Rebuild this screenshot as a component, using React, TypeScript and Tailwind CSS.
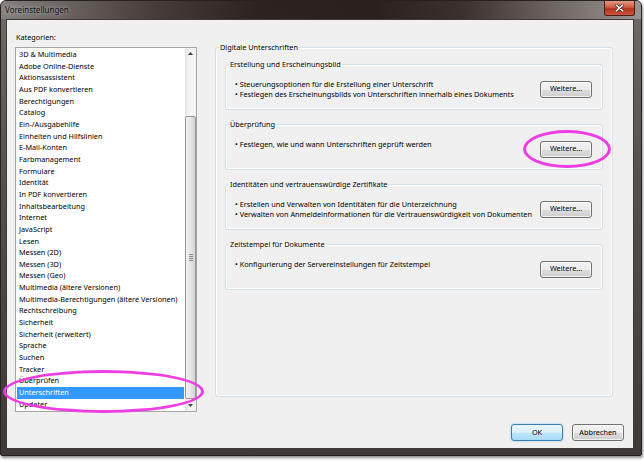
import type { ReactNode } from 'react';

const categories = [
  '3D & Multimedia',
  'Adobe Online-Dienste',
  'Aktionsassistent',
  'Aus PDF konvertieren',
  'Berechtigungen',
  'Catalog',
  'Ein-/Ausgabehilfe',
  'Einheiten und Hilfslinien',
  'E-Mail-Konten',
  'Farbmanagement',
  'Formulare',
  'Identität',
  'In PDF konvertieren',
  'Inhaltsbearbeitung',
  'Internet',
  'JavaScript',
  'Lesen',
  'Messen (2D)',
  'Messen (3D)',
  'Messen (Geo)',
  'Multimedia (ältere Versionen)',
  'Multimedia-Berechtigungen (ältere Versionen)',
  'Rechtschreibung',
  'Sicherheit',
  'Sicherheit (erweitert)',
  'Sprache',
  'Suchen',
  'Tracker',
  'Überprüfen',
  'Unterschriften',
  'Updater',
];

const sections = [
  {
    title: 'Erstellung und Erscheinungsbild',
    lines: [
      'Steuerungsoptionen für die Erstellung einer Unterschrift',
      'Festlegen des Erscheinungsbilds von Unterschriften innerhalb eines Dokuments',
    ],
  },
  {
    title: 'Überprüfung',
    lines: ['Festlegen, wie und wann Unterschriften geprüft werden'],
  },
  {
    title: 'Identitäten und vertrauenswürdige Zertifikate',
    lines: [
      'Erstellen und Verwalten von Identitäten für die Unterzeichnung',
      'Verwalten von Anmeldeinformationen für die Vertrauenswürdigkeit von Dokumenten',
    ],
  },
  {
    title: 'Zeitstempel für Dokumente',
    lines: ['Konfigurierung der Servereinstellungen für Zeitstempel'],
  },
];

function Button({ children, primary = false }: { children: ReactNode; primary?: boolean }) {
  return (
    <button
      className={
        primary
          ? 'h-[17px] w-[52px] rounded-[3px] border border-[#3c7fb1] bg-[linear-gradient(180deg,#eaf6fd_0%,#d9f0fc_50%,#bee6fd_51%,#a7d9f5_100%)] leading-none text-black shadow-[0_0_2px_#7fc7ef]'
          : 'h-[17px] w-[52px] rounded-[3px] border border-[#707070] bg-[linear-gradient(180deg,#f2f2f2_0%,#ebebeb_50%,#dddddd_51%,#cfcfcf_100%)] leading-none text-black shadow-[inset_0_0_0_1px_rgba(255,255,255,0.7)]'
      }
    >
      {children}
    </button>
  );
}

function Arrow({ down = false }: { down?: boolean }) {
  return (
    <svg width="5" height="3" viewBox="0 0 5 3" className="block">
      <path d={down ? 'M0 0H5L2.5 3Z' : 'M0 3H5L2.5 0Z'} fill="#3f3f3f" />
    </svg>
  );
}

function ScrollBar() {
  return (
    <div className="flex w-[11px] shrink-0 flex-col bg-[linear-gradient(90deg,#e3e3e3,#f4f4f4_40%,#f4f4f4)]">
      <div className="flex h-[11px] items-center justify-center">
        <Arrow />
      </div>
      <div className="flex-1 pt-[57px]">
        <div className="flex h-[283px] flex-col items-center justify-center gap-[1px] rounded-[2px] border border-[#979797] bg-[linear-gradient(90deg,#f3f3f3,#e6e6e6_50%,#d4d4d4)]">
          <span className="block h-px w-[4px] bg-[#8a8a8a]" />
          <span className="block h-px w-[4px] bg-[#8a8a8a]" />
          <span className="block h-px w-[4px] bg-[#8a8a8a]" />
          <span className="block h-px w-[4px] bg-[#8a8a8a]" />
        </div>
      </div>
      <div className="flex h-[11px] items-center justify-center">
        <Arrow down />
      </div>
    </div>
  );
}

function Section({ title, lines }: { title: string; lines: string[] }) {
  return (
    <fieldset className="h-[52px] rounded-[3px] border border-[#d5dfe5] px-[9px] pr-[10px] shadow-[inset_0_0_0_1px_#ffffff]">
      <legend className="-ml-[6px] px-[1px] leading-[12px]">{title}</legend>
      <div className="flex items-center justify-between pt-[9px]">
        <div className="h-[20px] whitespace-nowrap leading-[10px]">
          {lines.map((line) => (
            <div key={line}>• {line}</div>
          ))}
        </div>
        <Button>Weitere...</Button>
      </div>
    </fieldset>
  );
}

export default function App() {
  return (
    <div className="relative h-[461px] w-[644px] overflow-hidden bg-white font-['Noto_Sans','Open_Sans',sans-serif] text-[7.3px] text-black">
      <div className="flex h-[456px] w-[642px] flex-col rounded-t-[6px] rounded-b-[2px] border border-[#272220] bg-[linear-gradient(180deg,#716b68_0%,#55504d_40%,#3f3937_100%)] shadow-[1px_2px_3px_rgba(0,0,0,0.45)]">
        {/* title bar */}
        <div className="flex h-[18px] items-start justify-between rounded-t-[5px] bg-[linear-gradient(90deg,#86817d_0%,#6a6360_10%,#463c39_24%,#2c221f_40%,#2a201e_58%,#3a302d_72%,#6c6461_86%,#9a9490_100%)]">
          <span className="pl-[4px] pt-[3px] text-[8px] leading-[12px] text-[#111] [text-shadow:0_0_4px_rgba(255,255,255,0.7)]">
            Voreinstellungen
          </span>
          <div className="mr-[6px] flex h-[15px] w-[31px] items-center justify-center rounded-b-[3px] border border-t-0 border-[#4a1d16] bg-[linear-gradient(180deg,#e49a85_0%,#cf5a42_45%,#b2321f_55%,#c8553b_100%)]">
            <svg width="9" height="8" viewBox="0 0 9 8">
              <path d="M1.2 1L7.8 7M7.8 1L1.2 7" stroke="#3a1a14" strokeWidth="3" strokeLinecap="round" />
              <path d="M1.2 1L7.8 7M7.8 1L1.2 7" stroke="#ffffff" strokeWidth="1.6" strokeLinecap="round" />
            </svg>
          </div>
        </div>

        {/* client area */}
        <div className="mb-[6px] ml-[5px] mr-[7px] flex flex-1 flex-col border border-[#403936] bg-[#f0f0f0]">
          <div className="flex pt-[11px]">
            <div className="pl-[8px]">
              <div className="h-[16px] pl-[1px] leading-[12px]">Kategorien:</div>
              <div className="flex h-[365px] w-[182px] border border-[#a5a5a5] bg-white">
                <ul className="min-w-0 flex-1 p-px">
                  {categories.map((c) => (
                    <li
                      key={c}
                      className={
                        c === 'Unterschriften'
                          ? 'h-[11.67px] truncate bg-[#3399ff] pl-[2px] leading-[11.67px] text-white'
                          : 'h-[11.67px] truncate pl-[2px] leading-[11.67px]'
                      }
                    >
                      {c}
                    </li>
                  ))}
                </ul>
                <ScrollBar />
              </div>
            </div>

            <fieldset className="ml-[18px] mt-[10px] h-[356px] w-[398px] rounded-[3px] border border-[#d5dfe5] px-[9px] pt-[5px] shadow-[inset_0_0_0_1px_#ffffff]">
              <legend className="-ml-[6px] px-[1px] leading-[12px]">Digitale Unterschriften</legend>
              <div className="flex flex-col gap-[8px]">
                {sections.map((s) => (
                  <Section key={s.title} title={s.title} lines={s.lines} />
                ))}
              </div>
            </fieldset>
          </div>

          <div className="mt-[12px] flex justify-end gap-[9px] pr-[9px]">
            <Button primary>OK</Button>
            <Button>Abbrechen</Button>
          </div>
        </div>
      </div>

      {/* hand-drawn highlight marks */}
      <div className="pointer-events-none absolute left-[3px] top-[370px] h-[43px] w-[201px] rounded-[50%] border-[3px] border-[#ee3de3]" />
      <div className="pointer-events-none absolute left-[523px] top-[130px] h-[38px] w-[88px] rounded-[50%] border-[3px] border-[#ee3de3]" />
    </div>
  );
}
